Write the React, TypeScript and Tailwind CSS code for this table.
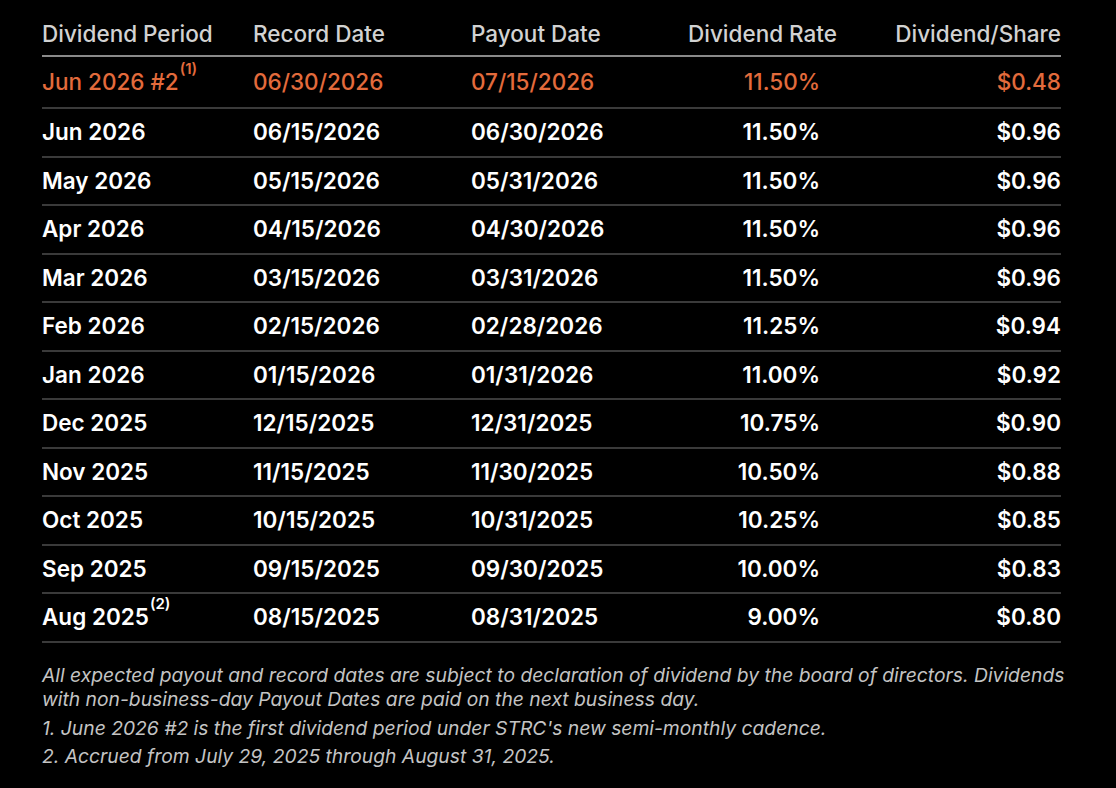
type Row = {
  period: string;
  note?: string;
  record: string;
  payout: string;
  rate: string;
  share: string;
  highlight?: boolean;
};

const rows: Row[] = [
  { period: "Jun 2026 #2", note: "(1)", record: "06/30/2026", payout: "07/15/2026", rate: "11.50%", share: "$0.48", highlight: true },
  { period: "Jun 2026", record: "06/15/2026", payout: "06/30/2026", rate: "11.50%", share: "$0.96" },
  { period: "May 2026", record: "05/15/2026", payout: "05/31/2026", rate: "11.50%", share: "$0.96" },
  { period: "Apr 2026", record: "04/15/2026", payout: "04/30/2026", rate: "11.50%", share: "$0.96" },
  { period: "Mar 2026", record: "03/15/2026", payout: "03/31/2026", rate: "11.50%", share: "$0.96" },
  { period: "Feb 2026", record: "02/15/2026", payout: "02/28/2026", rate: "11.25%", share: "$0.94" },
  { period: "Jan 2026", record: "01/15/2026", payout: "01/31/2026", rate: "11.00%", share: "$0.92" },
  { period: "Dec 2025", record: "12/15/2025", payout: "12/31/2025", rate: "10.75%", share: "$0.90" },
  { period: "Nov 2025", record: "11/15/2025", payout: "11/30/2025", rate: "10.50%", share: "$0.88" },
  { period: "Oct 2025", record: "10/15/2025", payout: "10/31/2025", rate: "10.25%", share: "$0.85" },
  { period: "Sep 2025", record: "09/15/2025", payout: "09/30/2025", rate: "10.00%", share: "$0.83" },
  { period: "Aug 2025", note: "(2)", record: "08/15/2025", payout: "08/31/2025", rate: "9.00%", share: "$0.80" },
];

const cols = "grid grid-cols-[211px_218px_200px_166px_224px] items-center";

export default function App() {
  return (
    <div className="w-[1116px] h-[788px] bg-black font-['Inter','Liberation_Sans',sans-serif] overflow-hidden">
      <div className="pl-[42px] pt-[12px] w-[1061px]">
        {/* header */}
        <div className={`${cols} h-[45px] border-b-2 border-[#8a8a8a] text-[22.5px] font-medium text-[#d2d2d2]`}>
          <div>Dividend Period</div>
          <div>Record Date</div>
          <div>Payout Date</div>
          <div className="text-right">Dividend Rate</div>
          <div className="text-right">Dividend/Share</div>
        </div>

        {rows.map((r, i) => (
          <div
            key={r.period}
            className={`${cols} ${i === 0 ? "h-[52px]" : "h-[48.5px]"} border-b-2 border-[#3a3a3a] text-[22.5px] ${
              r.highlight ? "text-[#e36b3c] font-medium" : "text-white font-semibold"
            }`}
          >
            <div className="flex items-start">
              <span>{r.period}</span>
              <span className="text-[15px] -mt-[7px] ml-[1px] font-semibold">{r.note}</span>
            </div>
            <div>{r.record}</div>
            <div>{r.payout}</div>
            <div className="text-right pr-[17px]">{r.rate}</div>
            <div className="text-right">{r.share}</div>
          </div>
        ))}

        <div className="mt-[20px] w-[1036px] text-[19.3px] italic text-[#c4c4c4] leading-[24px]">
          <p>
            All expected payout and record dates are subject to declaration of dividend by the board of directors. Dividends
            with non-business-day Payout Dates are paid on the next business day.
          </p>
          <p className="mt-[5px]">1. June 2026 #2 is the first dividend period under STRC's new semi-monthly cadence.</p>
          <p className="mt-[4px]">2. Accrued from July 29, 2025 through August 31, 2025.</p>
        </div>
      </div>
    </div>
  );
}
